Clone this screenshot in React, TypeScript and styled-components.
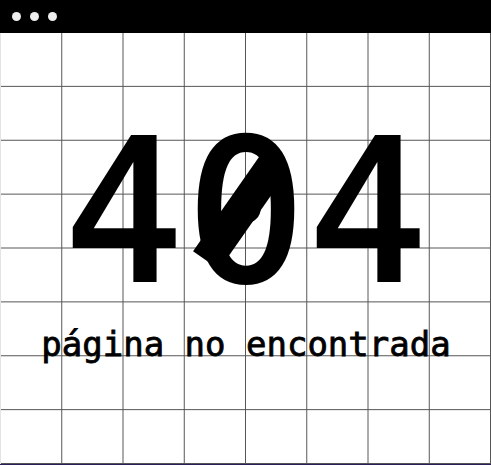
import React from "react";
import styled, { createGlobalStyle } from "styled-components";

const Global = createGlobalStyle`
  html, body { margin: 0; padding: 0; background: #fff; }
  #root { width: 491px; height: 465px; }
`;

const Window = styled.div`
  width: 491px;
  height: 465px;
  display: flex;
  flex-direction: column;
  overflow: hidden;
  box-sizing: border-box;
  border-bottom: 1px solid #2b1f5a;
`;

const TitleBar = styled.div`
  height: 33px;
  flex: none;
  background: #000;
  display: flex;
  align-items: center;
  gap: 9px;
  padding: 0 0 1px 12px;
  box-sizing: border-box;
`;

const Dot = styled.span`
  width: 9px;
  height: 9px;
  border-radius: 50%;
  background: #eeeeee;
`;

const Grid = styled.main`
  flex: 1;
  position: relative;
  display: flex;
  flex-direction: column;
  align-items: center;
  background-color: #fff;
  background-image:
    linear-gradient(to right, transparent calc(100% - 1px), #555 calc(100% - 1px)),
    linear-gradient(to bottom, transparent calc(100% - 1px), #555 calc(100% - 1px));
  background-size: 12.5% 12.5%;
  border-left: 1px solid #e4e4e4;
`;

const Code = styled.h1`
  margin: 81px -4px 0 0;
  font-family: "DejaVu Sans Mono", monospace;
  font-weight: normal;
  font-size: 196px;
  letter-spacing: 4px;
  line-height: 1;
  color: #000;
  -webkit-text-stroke: 4px #000;
`;

const Zero = styled.span`
  position: relative;
  &::after {
    content: "";
    position: absolute;
    left: calc(50% - 7.5px);
    top: calc(50% - 0.5px);
    width: 32px;
    height: 118px;
    background: #000;
    transform: translate(-50%, -50%) rotate(35deg);
  }
`;

const Message = styled.p`
  margin: 17px 0 0 0;
  font-family: "DejaVu Sans Mono", monospace;
  font-size: 34px;
  line-height: 1;
  color: #000;
  -webkit-text-stroke: 0.8px #000;
`;

export default function App() {
  return (
    <>
      <Global />
      <Window>
        <TitleBar>
          <Dot />
          <Dot />
          <Dot />
        </TitleBar>
        <Grid>
          <Code>
            4<Zero>0</Zero>4
          </Code>
          <Message>página no encontrada</Message>
        </Grid>
      </Window>
    </>
  );
}
